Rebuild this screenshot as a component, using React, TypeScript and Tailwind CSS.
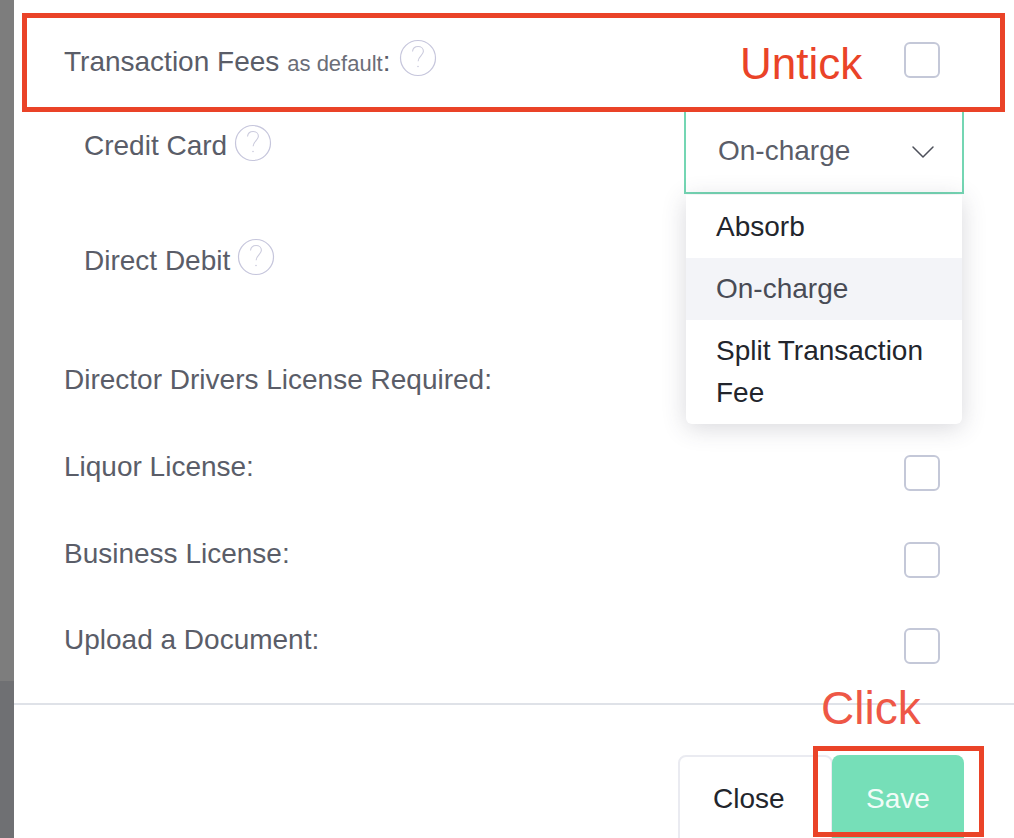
import React from 'react';
import { ChevronDown } from 'lucide-react';

const HelpIcon = ({ className = '' }: { className?: string }) => (
  <svg width="38" height="38" viewBox="0 0 38 38" fill="none" className={`shrink-0 ${className}`}>
    <circle cx="19" cy="19" r="17.5" stroke="#c6c6dc" strokeWidth="1.2" />
    <path d="M13.5 12.5c.4-3.2 2.6-5 5.6-5 3 0 5.3 1.9 5.3 4.8 0 4-5 4.7-5.3 10" stroke="#cbcbdd" strokeWidth="1.1" />
    <circle cx="19" cy="27.5" r="0.8" fill="#cbcbdd" />
  </svg>
);

const Checkbox = ({ className = '' }: { className?: string }) => (
  <div className={`w-9 h-9 shrink-0 rounded-md border-2 border-[#c4c8d8] bg-white ${className}`} />
);

const rows = [
  { label: 'Liquor License:' },
  { label: 'Business License:' },
  { label: 'Upload a Document:' },
];

export default function App() {
  return (
    <div className="relative flex w-[1014px] h-[838px] overflow-hidden bg-white font-['Liberation_Sans',sans-serif] text-[28px] text-[#5a5d68]">
      <div className="w-[14px] flex flex-col">
        <div className="h-[681px] bg-[#7d7d7d]" />
        <div className="flex-1 bg-[#6f7073]" />
      </div>

      <div className="flex-1 flex flex-col">
        <div className="h-[110px] shrink-0 pl-[50px] pt-[42px] flex items-start">
          <span className="leading-[40px]">Transaction Fees</span>
          <span className="text-[22px] leading-[40px] ml-[8px] text-[#6b6e78] mt-[2px]">as default</span>
          <span className="leading-[40px]">:</span>
          <HelpIcon className="ml-[9px] -mt-[3px]" />
        </div>

        <div className="h-[115px] shrink-0 pl-[70px] flex items-start">
          <span className="leading-[40px] mt-[16px]">Credit Card</span>
          <HelpIcon className="ml-[7px] mt-[14px]" />
          <div className="ml-auto mr-[50px] w-[280px] h-[84px] border-2 border-t-0 border-[#74d6b3] bg-white flex items-center justify-between pl-[32px] pr-[19px]">
            <span className="mt-[-1px]">On-charge</span>
            <ChevronDown size={40} strokeWidth={0.9} className="text-[#4d505a] mt-[2px]" />
          </div>
        </div>

        <div className="h-[112px] shrink-0 pl-[70px] flex items-start">
          <span className="leading-[40px] mt-[16px]">Direct Debit</span>
          <HelpIcon className="ml-[7px] mt-[13px]" />
        </div>

        <div className="h-[87px] shrink-0 pl-[50px] flex items-start">
          <span className="leading-[40px] mt-[23px]">Director Drivers License Required:</span>
        </div>

        {rows.map((r) => (
          <div key={r.label} className="h-[86.67px] shrink-0 pl-[50px] pr-[74px] flex items-start justify-between">
            <span className="leading-[40px] mt-[23px]">{r.label}</span>
            <Checkbox className="mt-[31px]" />
          </div>
        ))}

        <div className="mt-[19px] h-[2px] shrink-0 bg-[#dfe2e8]" />

        <div className="pt-[50px] pr-[50px] flex justify-end shrink-0">
          <button className="w-[155px] h-[90px] border-2 border-[#eaebf1] rounded-lg text-[#22252c] text-left pl-[33px] pb-[2px] bg-white">
            Close
          </button>
          <button className="w-[132px] h-[90px] rounded-lg bg-[#76dfb8] text-[#f2fcf8] pb-[2px] -ml-[1px]">
            Save
          </button>
        </div>
      </div>

      {/* select menu */}
      <div className="absolute left-[686px] top-[195px] w-[276px] h-[229px] bg-white rounded-b-md shadow-[0_4px_24px_rgba(60,60,80,0.2)] text-[#22252c]">
        <div className="h-[63px] pl-[30px] flex items-center">Absorb</div>
        <div className="h-[62px] pl-[30px] flex items-center bg-[#f3f4f8] text-[#484b55]">On-charge</div>
        <div className="pl-[30px] pt-[10px] leading-[42px]">Split Transaction Fee</div>
      </div>

      {/* annotations */}
      <div className="absolute left-[22px] top-[13px] w-[983px] h-[99px] border-[5px] border-[#ea4328]" />
      <span className="absolute left-[740px] top-[38px] text-[44px] leading-[52px] text-[#ea4328]">Untick</span>
      <Checkbox className="absolute left-[904px] top-[42px]" />
      <span className="absolute left-[821px] top-[682px] text-[46px] leading-[52px] text-[#ee5746]">Click</span>
      <div className="absolute left-[813px] top-[746px] w-[171px] h-[91px] border-[5px] border-[#ea4328]" />
    </div>
  );
}
